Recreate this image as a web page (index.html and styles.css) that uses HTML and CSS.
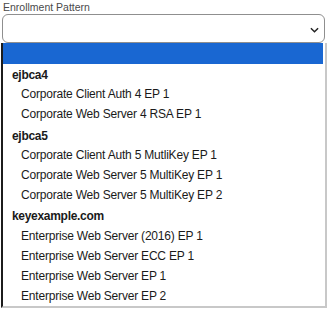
FILE: index.html
```html
<!DOCTYPE html>
<html lang="en">
<head>
    <title>Enrollment Pattern</title>
    <meta charset="UTF-8">
    <link rel="stylesheet" href="styles.css">
</head>
<body>
    <div class="field">
        <label class="field-label">Enrollment Pattern</label>
        <div class="select-box">
            <svg class="chevron" viewBox="0 0 10 6" xmlns="http://www.w3.org/2000/svg">
                <path d="M1 1l4 4 4-4"></path>
            </svg>
        </div>
        <div class="listbox">
            <div class="option selected"></div>
            <div class="group">ejbca4</div>
            <div class="option">Corporate Client Auth 4 EP 1</div>
            <div class="option">Corporate Web Server 4 RSA EP 1</div>
            <div class="group">ejbca5</div>
            <div class="option">Corporate Client Auth 5 MutliKey EP 1</div>
            <div class="option">Corporate Web Server 5 MultiKey EP 1</div>
            <div class="option">Corporate Web Server 5 MultiKey EP 2</div>
            <div class="group">keyexample.com</div>
            <div class="option">Enterprise Web Server (2016) EP 1</div>
            <div class="option">Enterprise Web Server ECC EP 1</div>
            <div class="option">Enterprise Web Server EP 1</div>
            <div class="option">Enterprise Web Server EP 2</div>
        </div>
    </div>
</body>
</html>
```

FILE: styles.css
```css
* {
    margin: 0;
    padding: 0;
    box-sizing: border-box;
}

body {
    font-family: "Liberation Sans", Arial, sans-serif;
    background-color: #fff;
    color: #1a1a1a;
}

.field {
    display: flex;
    flex-direction: column;
}

.field-label {
    font-size: 10.5px;
    line-height: 14px;
    color: #4a4a4a;
    padding-left: 3px;
}

.select-box {
    margin-left: 2px;
    width: 323px;
    height: 29px;
    border: 1px solid #8f8f8f;
    border-radius: 6px;
    display: flex;
    align-items: center;
    justify-content: flex-end;
    padding-right: 5px;
    padding-top: 2px;
}

.chevron {
    width: 9px;
    height: 6px;
    fill: none;
    stroke: #222;
    stroke-width: 1.6;
}

.listbox {
    margin-left: 1px;
    width: 326px;
    border-left: 2px solid #1c1c1c;
    border-right: 2px solid #c8c8c8;
    border-bottom: 2px solid #c8c8c8;
    padding-right: 2px;
}

.option,
.group {
    height: 20.2px;
    line-height: 20px;
    font-size: 12px;
    letter-spacing: -0.2px;
    white-space: nowrap;
}

.option {
    padding-left: 18px;
}

.group {
    padding-left: 9px;
    font-weight: bold;
    letter-spacing: -0.3px;
    padding-top: 1px;
}

.option.selected {
    height: 21px;
    background-color: #1967d2;
}
```
